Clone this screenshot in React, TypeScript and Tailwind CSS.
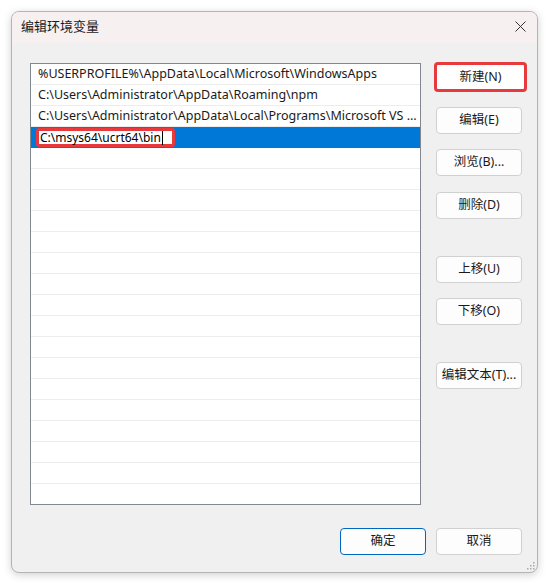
const rows = [
  "%USERPROFILE%\\AppData\\Local\\Microsoft\\WindowsApps",
  "C:\\Users\\Administrator\\AppData\\Roaming\\npm",
  "C:\\Users\\Administrator\\AppData\\Local\\Programs\\Microsoft VS ...",
];

const font = { fontFamily: '"Noto Sans", "Noto Sans CJK SC", sans-serif' };

function Btn({ label, primary = false, className = "" }: { label: string; primary?: boolean; className?: string }) {
  return (
    <div
      className={`w-[86px] h-[27px] rounded-[4px] bg-[#fdfdfd] flex items-center justify-center text-[12.5px] text-[#1a1a1a] ${
        primary ? "border-[1.5px] border-[#0067c0]" : "border border-[#d0d0d0]"
      } ${className}`}
    >
      {label}
    </div>
  );
}

export default function App() {
  return (
    <div className="w-[549px] h-[585px] bg-white pt-[11px] pl-[11px]" style={font}>
      <div className="w-[527px] h-[562px] rounded-[8px] border border-[#b4b4b4] bg-[#f0f0f0] overflow-hidden flex flex-col shadow-[0_2px_8px_rgba(0,0,0,0.18)]">
        {/* title bar */}
        <div className="h-[31px] bg-[#f7f0f1] flex items-center justify-between pl-[9px] pr-[11px] pb-[2px]">
          <span className="text-[13px] text-[#1a1a1a]">编辑环境变量</span>
          <svg width="11" height="11" viewBox="0 0 11 11">
            <path d="M0.5 0.5L10.5 10.5M10.5 0.5L0.5 10.5" stroke="#333" strokeWidth="1" />
          </svg>
        </div>

        {/* body */}
        <div className="flex-1 flex flex-col pt-[20px] pl-[18px] pr-[15px] pb-[17px] relative">
          <div className="flex gap-[15px]">
            {/* list */}
            <div className="w-[392px] h-[442px] border border-[#828790] bg-white flex flex-col overflow-hidden">
              {rows.map((r) => (
                <div
                  key={r}
                  className="h-[21px] shrink-0 border-b border-[#ededed] pl-[7px] pt-[1px] flex items-center text-[12.5px] text-[#1a1a1a] whitespace-nowrap overflow-hidden"
                >
                  {r}
                </div>
              ))}
              <div className="h-[21px] shrink-0 bg-[#0078d7] flex items-center pl-[5px]">
                <div className="h-[19px] w-[139px] bg-white border-[3px] border-[#e8393c] rounded-[3px] flex items-center pl-[1px] text-[12px] text-black">
                  C:\msys64\ucrt64\bin
                  <span className="inline-block w-[1px] h-[14px] bg-black ml-[1px]" />
                </div>
              </div>
              {Array.from({ length: 17 }).map((_, i) => (
                <div key={i} className="h-[21px] shrink-0 border-b border-[#ededed]" />
              ))}
            </div>

            {/* buttons */}
            <div className="flex flex-col pt-[1px]">
              <div className="relative">
                <Btn label="新建(N)" />
                <div className="absolute left-[-2px] top-[-2px] w-[93px] h-[30px] border-[3px] border-[#e8393c] rounded-[4px] bg-white flex items-center justify-center text-[12.5px] text-[#1a1a1a]">
                  新建(N)
                </div>
              </div>
              <Btn label="编辑(E)" className="mt-[16px]" />
              <Btn label="浏览(B)..." className="mt-[15px]" />
              <Btn label="删除(D)" className="mt-[16px]" />
              <Btn label="上移(U)" className="mt-[37px]" />
              <Btn label="下移(O)" className="mt-[15px]" />
              <Btn label="编辑文本(T)..." className="mt-[37px]" />
            </div>
          </div>

          {/* footer */}
          <div className="mt-auto flex justify-end gap-[10px]">
            <Btn label="确定" primary />
            <Btn label="取消" />
          </div>

          {/* resize grip */}
          <svg className="absolute right-[2px] bottom-[2px]" width="8" height="8" viewBox="0 0 8 8">
            <rect x="6" y="0" width="1.5" height="1.5" fill="#aaa" />
            <rect x="3" y="3" width="1.5" height="1.5" fill="#aaa" />
            <rect x="6" y="3" width="1.5" height="1.5" fill="#aaa" />
            <rect x="0" y="6" width="1.5" height="1.5" fill="#aaa" />
            <rect x="3" y="6" width="1.5" height="1.5" fill="#aaa" />
            <rect x="6" y="6" width="1.5" height="1.5" fill="#aaa" />
          </svg>
        </div>
      </div>
    </div>
  );
}
